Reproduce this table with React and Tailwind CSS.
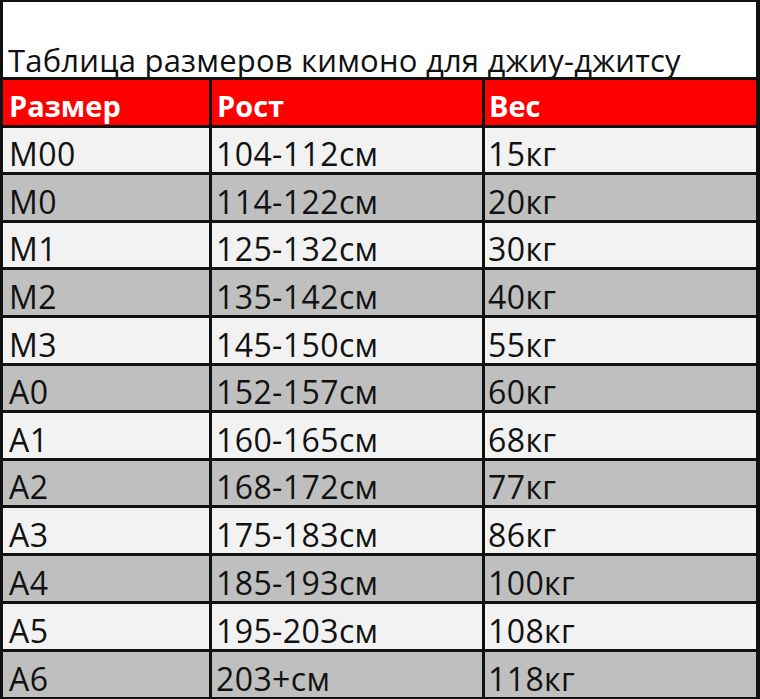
import React from "react";

const rows = [
  ["M00", "104-112см", "15кг", "bg-[#f2f2f2]", "h-[44px]"],
  ["M0", "114-122см", "20кг", "bg-[#bfbfbf]", "h-[45px]"],
  ["M1", "125-132см", "30кг", "bg-[#f2f2f2]", "h-[44px]"],
  ["M2", "135-142см", "40кг", "bg-[#bfbfbf]", "h-[45px]"],
  ["M3", "145-150см", "55кг", "bg-[#f2f2f2]", "h-[45px]"],
  ["A0", "152-157см", "60кг", "bg-[#bfbfbf]", "h-[44px]"],
  ["A1", "160-165см", "68кг", "bg-[#f2f2f2]", "h-[45px]"],
  ["A2", "168-172см", "77кг", "bg-[#bfbfbf]", "h-[44px]"],
  ["A3", "175-183см", "86кг", "bg-[#f2f2f2]", "h-[45px]"],
  ["A4", "185-193см", "100кг", "bg-[#bfbfbf]", "h-[45px]"],
  ["A5", "195-203см", "108кг", "bg-[#f2f2f2]", "h-[45px]"],
  ["A6", "203+см", "118кг", "bg-[#bfbfbf]", "h-[45px]"],
];

const font = { fontFamily: '"Open Sans", "Noto Sans", sans-serif' };

export default function App() {
  return (
    <div className="w-[760px] h-[699px] bg-white text-[#111]" style={font}>
      <div className="w-[760px] border-t-2 border-b-2 border-l-[3px] border-r-4 border-[#111]">
        {/* title */}
        <div className="h-[75px] bg-white flex items-end pl-[5px] pb-[1px] text-[31px] leading-[32px] tracking-[0.2px]">
          Таблица размеров кимоно для джиу-джитсу
        </div>

        {/* header */}
        <div className="flex h-[48px] border-t-[3px] border-[#111] bg-[#fe0000] text-white font-bold text-[29px] leading-[30px]">
          <div className="w-[206px] flex items-end pl-[6px] pb-[4px]">Размер</div>
          <div className="w-[273px] border-l-[3px] border-[#111] flex items-end pl-[5px] pb-[4px]">Рост</div>
          <div className="flex-1 border-l-[3px] border-[#111] flex items-end pl-[4px] pb-[4px]">Вес</div>
        </div>

        {rows.map(([size, height, weight, bg, h]) => (
          <div key={size} className={`flex border-t-[3px] border-[#111] ${bg} text-[32px] leading-[32px] tracking-[0.4px]`}>
            <div className={`${h} w-[206px] flex items-end pl-[6px] pb-[2px]`}>{size}</div>
            <div className={`${h} w-[273px] border-l-[3px] border-[#111] flex items-end pl-[4px] pb-[2px]`}>{height}</div>
            <div className={`${h} flex-1 border-l-[3px] border-[#111] flex items-end pl-[3px] pb-[2px]`}>{weight}</div>
          </div>
        ))}
      </div>
    </div>
  );
}
